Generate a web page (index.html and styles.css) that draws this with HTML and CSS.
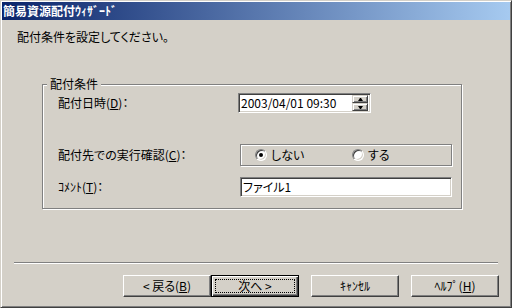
FILE: index.html
```html
<!DOCTYPE html>
<html lang="ja">
<head>
<meta charset="utf-8">
<title>簡易資源配付ｳｨｻﾞｰﾄﾞ</title>
<link rel="stylesheet" href="styles.css">
</head>
<body>
<div class="window">
  <div class="titlebar"><span class="title">簡易資源配付ｳｨｻﾞｰﾄﾞ</span></div>
  <div class="content">
    <p class="intro">配付条件を設定してください。</p>
    <div class="group">
      <span class="group-label">配付条件</span>
      <div class="row row-date">
        <span class="lbl">配付日時(<u>D</u>)：</span>
        <div class="field date">
          <span class="field-text">2003/04/01 09:30</span>
          <span class="spin"><span class="spin-btn up"></span><span class="spin-btn down"></span></span>
        </div>
      </div>
      <div class="row row-radio">
        <span class="lbl">配付先での実行確認(<u>C</u>)：</span>
        <div class="radio-box">
          <span class="opt opt-first"><span class="radio checked"></span>しない</span>
          <span class="opt"><span class="radio"></span>する</span>
        </div>
      </div>
      <div class="row row-comment">
        <span class="lbl">ｺﾒﾝﾄ(<u>T</u>)：</span>
        <div class="field comment"><span class="field-text">ファイル1</span></div>
      </div>
    </div>
    <div class="sep"></div>
    <div class="buttons">
      <button class="btn btn-back">&lt; 戻る(<u>B</u>)</button>
      <button class="btn btn-default">次へ &gt;</button>
      <button class="btn btn-gap">ｷｬﾝｾﾙ</button>
      <button class="btn btn-gap">ﾍﾙﾌﾟ(<u>H</u>)</button>
    </div>
  </div>
</div>
</body>
</html>
```
FILE: styles.css
```css
* { box-sizing: border-box; }
html, body { margin: 0; padding: 0; }
body {
  width: 512px;
  height: 308px;
  overflow: hidden;
  background: #d4d0c8;
  font-family: "Noto Sans CJK JP", "Noto Sans", sans-serif;
  font-size: 12px;
  line-height: 16px;
  color: #000;
  font-feature-settings: "palt";
}
u { text-decoration: underline; text-underline-offset: 1px; }

.window {
  width: 512px;
  height: 308px;
  border: 1px solid;
  border-color: #d4d0c8 #404040 #404040 #d4d0c8;
  box-shadow: inset 1px 1px 0 #fff, inset -1px -1px 0 #808080;
  padding: 1px;
  display: flex;
  flex-direction: column;
  background: #d4d0c8;
}

.titlebar {
  height: 18px;
  background: linear-gradient(to right, #0a246a, #a6caf0);
  display: flex;
  align-items: center;
  padding-left: 1px;
}
.title {
  color: #fff;
  font-weight: bold;
  font-size: 12px;
  line-height: 16px;
}

.content {
  flex: 1;
  display: flex;
  flex-direction: column;
}

.intro {
  margin: 9px 0 0 15px;
  height: 16px;
}

.group {
  position: relative;
  margin: 39px 0 0 40px;
  width: 420px;
  height: 125px;
  border: 1px solid #808080;
  box-shadow: inset 1px 1px 0 #fff, 1px 1px 0 #fff;
  padding: 8px 0 11px 15px;
  display: flex;
  flex-direction: column;
}
.group-label {
  position: absolute;
  left: 4px;
  top: -9px;
  padding: 0 3px 0 3px;
  background: #d4d0c8;
  line-height: 16px;
}

.row {
  display: flex;
  align-items: center;
}
.row-date { height: 20px; }
.row-radio { height: 22px; margin-top: 31px; }
.row-comment { height: 20px; margin-top: 11px; }

.lbl {
  width: 182px;
  flex: none;
}

.field {
  height: 20px;
  background: #fff;
  border: 1px solid;
  border-color: #808080 #fff #fff #808080;
  box-shadow: inset 1px 1px 0 #404040, inset -1px -1px 0 #d4d0c8;
  padding: 2px 2px 2px 2px;
  display: flex;
  align-items: center;
}
.field-text { flex: 1; line-height: 16px; white-space: nowrap; }
.date { width: 133px; margin-left: -2px; padding-right: 2px; }
.comment { width: 212px; }

.spin {
  width: 16px;
  height: 16px;
  display: flex;
  flex-direction: column;
}
.spin-btn {
  height: 8px;
  background: #d4d0c8;
  border: 1px solid;
  border-color: #d4d0c8 #404040 #404040 #d4d0c8;
  box-shadow: inset 1px 1px 0 #fff, inset -1px -1px 0 #808080;
  display: flex;
  align-items: center;
  justify-content: center;
}
.spin-btn::after {
  content: "";
  width: 1px;
  height: 0;
  border-left: 2px solid transparent;
  border-right: 2px solid transparent;
}
.spin-btn.up::after { border-bottom: 3px solid #000; }
.spin-btn.down::after { border-top: 3px solid #000; }

.radio-box {
  width: 212px;
  height: 22px;
  border: 1px solid #808080;
  box-shadow: inset 1px 1px 0 #fff, 1px 1px 0 #fff;
  display: flex;
  align-items: center;
  padding-left: 14px;
}
.opt {
  display: flex;
  align-items: center;
  gap: 4px;
}
.opt-first { width: 97px; }
.radio {
  position: relative;
  width: 12px;
  height: 12px;
  border-radius: 50%;
  background: #fff;
  border: 1px solid;
  border-color: #808080 #fff #fff #808080;
  box-shadow: inset 1px 1px 0 #404040, inset -1px -1px 0 #d4d0c8;
  flex: none;
}
.radio.checked::after {
  content: "";
  position: absolute;
  left: 3px;
  top: 3px;
  width: 4px;
  height: 4px;
  border-radius: 50%;
  background: #000;
}

.sep {
  margin: 53px 12px 0 12px;
  height: 2px;
  border-top: 1px solid #808080;
  border-bottom: 1px solid #fff;
}

.buttons {
  margin-top: 11px;
  display: flex;
  justify-content: flex-end;
  padding-right: 11px;
}
.btn {
  position: relative;
  width: 88px;
  height: 22px;
  margin: 0;
  padding: 0;
  background: #d4d0c8;
  border: 1px solid;
  border-color: #fff #404040 #404040 #fff;
  box-shadow: inset -1px -1px 0 #808080, inset 1px 1px 0 #d4d0c8;
  font: inherit;
  color: #000;
  display: flex;
  align-items: center;
  justify-content: center;
  white-space: nowrap;
}
.btn-gap { margin-left: 12px; }
.btn-default {
  border-color: #000;
  box-shadow: inset 1px 1px 0 #fff, inset -1px -1px 0 #404040, inset -2px -2px 0 #808080;
}
.btn-default::before {
  content: "";
  position: absolute;
  left: 3px;
  top: 3px;
  right: 3px;
  bottom: 3px;
  border: 1px dotted #000;
}
```
